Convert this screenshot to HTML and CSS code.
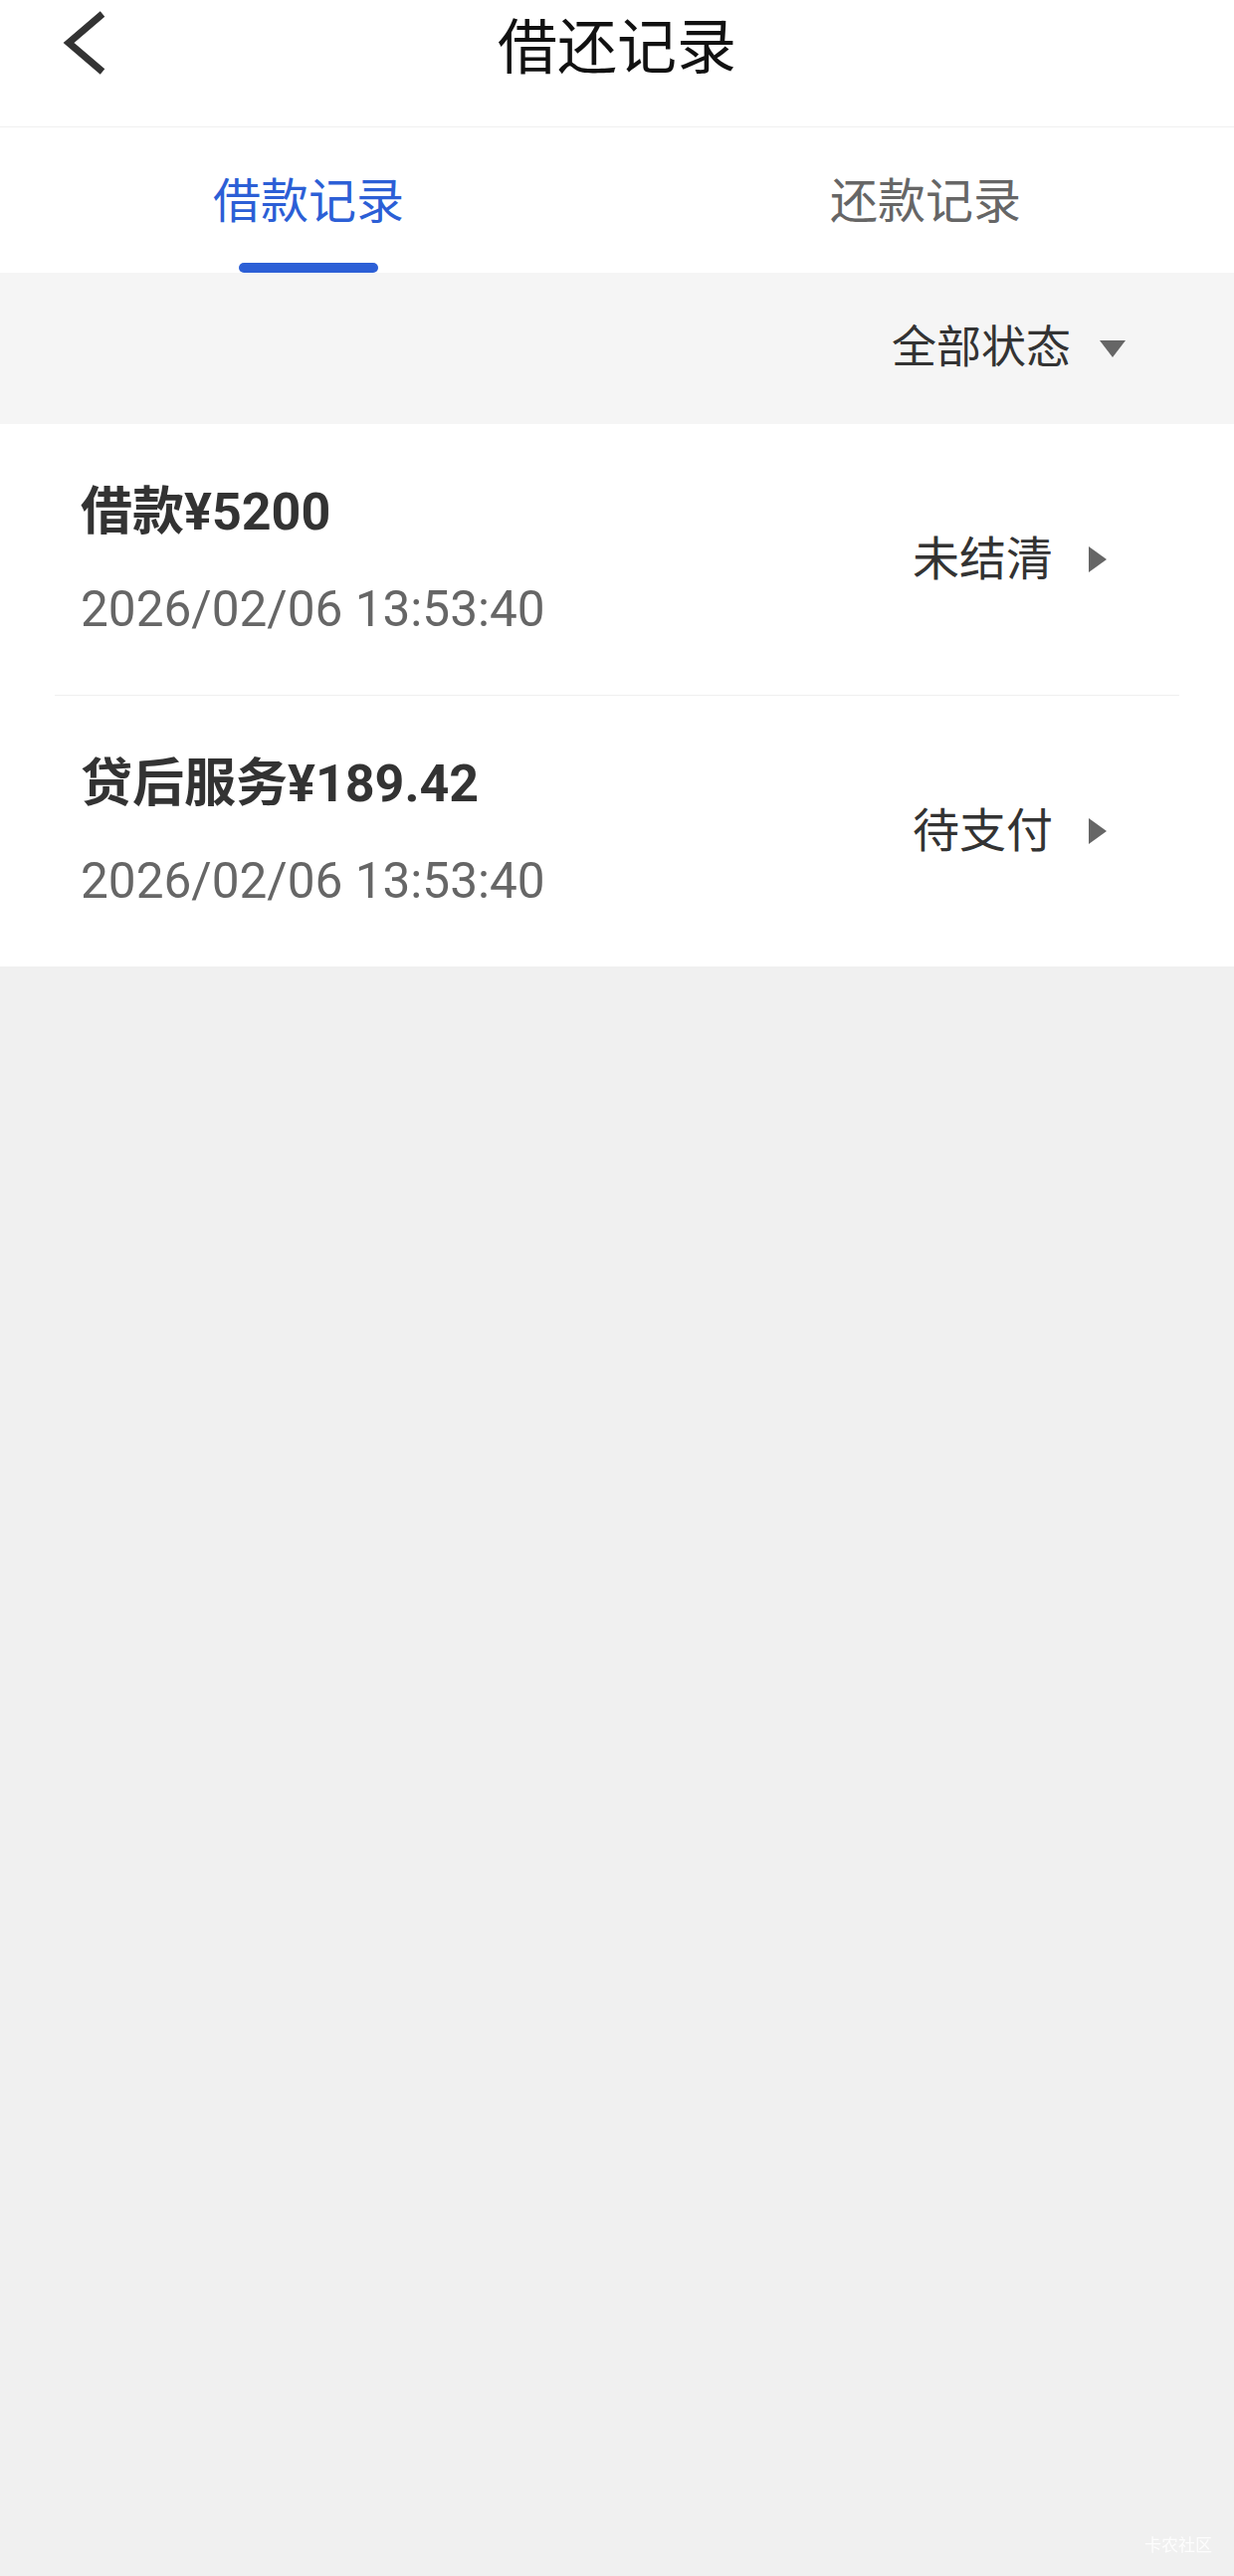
FILE: index.html
```html
<!DOCTYPE html>
<html lang="zh-CN">
<head>
  <meta charset="UTF-8">
  <meta name="viewport" content="width=device-width, initial-scale=1.0">
  <title>借还记录</title>
  <link rel="stylesheet" href="styles.css">
</head>
<body>
  <header class="topbar">
    <a class="back" href="#">
      <svg width="46" height="66" viewBox="0 0 46 66">
        <polyline points="41,4 7,33 41,62" fill="none" stroke="#333" stroke-width="7"/>
      </svg>
    </a>
    <h1>借还记录</h1>
    <span></span>
  </header>

  <nav class="tabs">
    <div class="tab active">
      <span class="tab-label">借款记录</span>
      <span class="tab-line"></span>
    </div>
    <div class="tab">
      <span class="tab-label">还款记录</span>
      <span class="tab-line"></span>
    </div>
  </nav>

  <div class="filter">
    <span class="filter-label">全部状态</span>
    <span class="caret-down"></span>
  </div>

  <div class="list">
    <div class="record">
      <div class="record-info">
        <div class="record-title">借款¥5200</div>
        <div class="record-date">2026/02/06 13:53:40</div>
      </div>
      <div class="record-status">
        <span class="status-text">未结清</span>
        <span class="caret-right"></span>
      </div>
    </div>
    <div class="record">
      <div class="record-info">
        <div class="record-title">贷后服务¥189.42</div>
        <div class="record-date">2026/02/06 13:53:40</div>
      </div>
      <div class="record-status">
        <span class="status-text">待支付</span>
        <span class="caret-right"></span>
      </div>
    </div>
  </div>

  <div class="watermark">卡农社区</div>
</body>
</html>
```

FILE: styles.css
```css
html {
  background: #f0f0f0;
}
body {
  font-family: Roboto, 'Noto Sans CJK SC', sans-serif;
  margin: 0;
  padding: 0;
  min-height: 100vh;
  background: #f0f0f0;
  color: #333;
}
.topbar {
  height: 127px;
  background: white;
  border-bottom: 1px solid #f0f0f0;
  display: grid;
  grid-template-columns: 1fr auto 1fr;
  align-items: start;
}
.back {
  display: block;
  margin-left: 62px;
  margin-top: 10px;
  width: 46px;
  height: 66px;
}
.topbar h1 {
  margin: 0;
  padding-top: 5px;
  font-size: 60px;
  font-weight: normal;
  line-height: 88px;
  color: #111;
}
.tabs {
  display: flex;
  background: white;
}
.tab {
  flex: 1;
  display: flex;
  flex-direction: column;
  align-items: center;
  padding-top: 42px;
}
.tab-label {
  font-size: 48px;
  line-height: 66px;
  color: #666;
}
.tab-line {
  margin-top: 28px;
  width: 140px;
  height: 10px;
  border-radius: 5px;
}
.tab.active .tab-label {
  color: #2c5fd6;
}
.tab.active .tab-line {
  background: #2c5fd6;
}
.filter {
  height: 152px;
  background: #f5f5f5;
  display: flex;
  justify-content: flex-end;
  align-items: center;
  padding-right: 109px;
}
.filter-label {
  font-size: 45px;
  color: #333;
  margin-bottom: 10px;
}
.caret-down {
  margin-left: 29px;
  width: 0;
  height: 0;
  border-left: 13px solid transparent;
  border-right: 13px solid transparent;
  border-top: 17px solid #666;
}
.list {
  background: white;
  padding: 0 55px;
}
.record {
  display: flex;
  justify-content: space-between;
  align-items: center;
  padding: 54px 73px 54px 26px;
}
.record + .record {
  border-top: 1px solid #efefef;
}
.record-title {
  font-size: 52px;
  font-weight: bold;
  line-height: 70px;
  color: #333;
}
.record-date {
  margin-top: 30px;
  font-size: 49.5px;
  line-height: 64px;
  color: #666;
}
.record-status {
  display: flex;
  align-items: center;
  font-size: 47px;
  color: #333;
}
.status-text {
  margin-bottom: 10px;
}
.caret-right {
  margin-left: 36px;
  width: 0;
  height: 0;
  border-top: 13px solid transparent;
  border-bottom: 13px solid transparent;
  border-left: 18px solid #666;
}
.watermark {
  position: fixed;
  right: 22px;
  bottom: 20px;
  font-size: 17px;
  color: rgba(255, 255, 255, 0.85);
}
```
